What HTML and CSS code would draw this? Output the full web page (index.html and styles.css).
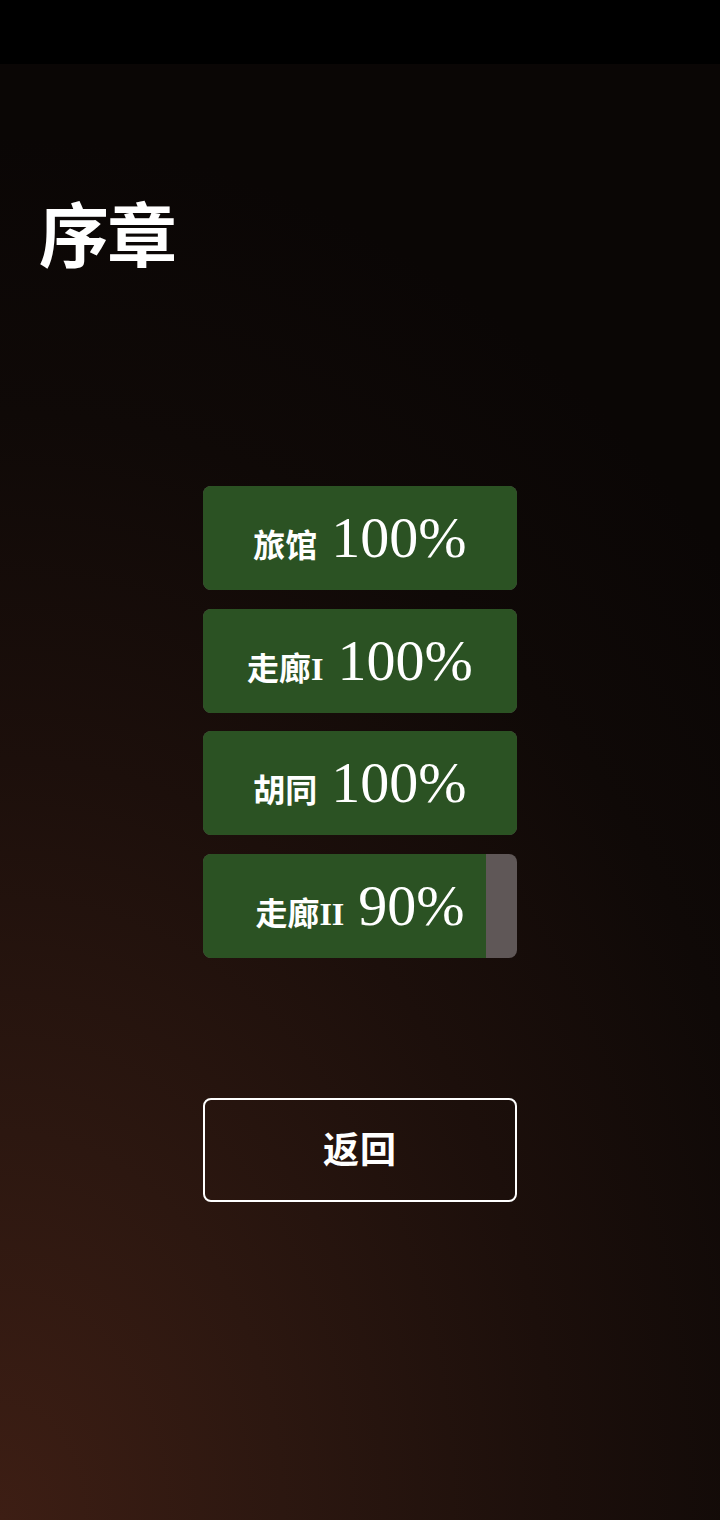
FILE: index.html
```html
<!DOCTYPE html>
<html lang="zh">
<head>
<meta charset="utf-8">
<link rel="stylesheet" href="styles.css">
</head>
<body>
<div class="statusbar"></div>
<main class="screen">
  <h1 class="title">序章</h1>
  <div class="levels">
    <button class="level"><span class="fill" style="width:100%"></span><span class="label"><span class="name">旅馆</span> <span class="pct">100%</span></span></button>
    <button class="level"><span class="fill" style="width:100%"></span><span class="label"><span class="name">走廊I</span> <span class="pct">100%</span></span></button>
    <button class="level"><span class="fill" style="width:100%"></span><span class="label"><span class="name">胡同</span> <span class="pct">100%</span></span></button>
    <button class="level"><span class="fill" style="width:90%"></span><span class="label"><span class="name">走廊II</span> <span class="pct">90%</span></span></button>
  </div>
  <button class="back">返回</button>
</main>
</body>
</html>
```

FILE: styles.css
```css
html, body {
  margin: 0;
  padding: 0;
}
body {
  width: 720px;
  height: 1520px;
  overflow: hidden;
  background: #000;
  font-family: "Liberation Serif", "Noto Sans CJK SC", serif;
  color: #fff;
}
.statusbar {
  height: 64px;
  background: #000;
}
.screen {
  height: 1456px;
  display: flex;
  flex-direction: column;
  align-items: center;
  background: radial-gradient(ellipse 140% 95% at 0% 100%, #3d1e14 0%, #2c1710 28%, #1c0f0b 55%, #0f0907 80%, #0a0605 100%);
}
.title {
  align-self: flex-start;
  margin: 132px 0 0 39px;
  font-family: "Noto Sans CJK SC", sans-serif;
  font-weight: 700;
  font-size: 70px;
  line-height: 72px;
  letter-spacing: -2px;
}
.levels {
  margin-top: 218px;
  display: flex;
  flex-direction: column;
  gap: 18.5px;
}
.level {
  position: relative;
  width: 314px;
  height: 104px;
  border: none;
  border-radius: 8px;
  background: #5f5757;
  overflow: hidden;
  padding: 0;
  display: flex;
  align-items: center;
  justify-content: center;
  color: #fff;
  font-family: inherit;
  font-size: 16px;
}
.fill {
  position: absolute;
  left: 0;
  top: 0;
  bottom: 0;
  background: #2b5223;
}
.label {
  position: relative;
  white-space: nowrap;
  line-height: 1;
}
.name {
  font-family: "Liberation Serif", "Noto Sans CJK SC", serif;
  font-weight: 700;
  font-size: 32px;
  margin-right: 10px;
}
.pct {
  font-family: "Liberation Serif", serif;
  font-size: 58px;
}
.back {
  margin-top: 140px;
  width: 314px;
  height: 104px;
  border: 2px solid #fff;
  border-radius: 8px;
  background: transparent;
  color: #fff;
  font-family: "Noto Sans CJK SC", sans-serif;
  font-weight: 700;
  font-size: 36px;
  letter-spacing: 1px;
  padding: 0 0 6px;
}
```
